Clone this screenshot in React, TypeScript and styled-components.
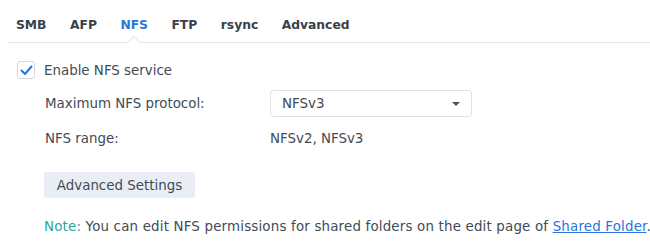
import React, { useState } from 'react';
import styled, { createGlobalStyle } from 'styled-components';

const GlobalStyle = createGlobalStyle`
  html, body {
    margin: 0;
    padding: 0;
    background: #ffffff;
  }
  body {
    font-family: "DejaVu Sans", Verdana, sans-serif;
    color: #414b55;
    -webkit-font-smoothing: antialiased;
  }
`;

const Page = styled.div`
  width: 650px;
  height: 250px;
  overflow: hidden;
  background: #fff;
`;

const TabBar = styled.div`
  display: flex;
  align-items: flex-end;
  height: 42px;
  margin-left: 8px;
  padding-left: 8px;
  border-bottom: 1px solid #e3e7ec;
`;

const Tab = styled.div<{ active?: boolean }>`
  position: relative;
  padding: 0 0 10px 0;
  margin-right: 23.5px;
  font-size: 12.3px;
  font-weight: bold;
  color: ${p => (p.active ? '#2a74dc' : '#39414b')};
  cursor: pointer;

  &::after {
    content: '';
    display: ${p => (p.active ? 'block' : 'none')};
    position: absolute;
    left: 50%;
    margin-left: -5px;
    bottom: -1px;
    width: 9px;
    height: 9px;
    background: #fff;
    border-left: 1px solid #e3e7ec;
    border-top: 1px solid #e3e7ec;
    transform: translate(0, 5px) rotate(45deg);
  }
`;

const Body = styled.div`
  padding: 18px 0 0 17px;
`;

const CheckRow = styled.label`
  display: flex;
  align-items: center;
  gap: 9px;
  height: 18px;
  font-size: 13.4px;
  color: #414b55;
`;

const Box = styled.span`
  width: 16px;
  height: 16px;
  border: 1px solid #d4dae1;
  border-radius: 3px;
  background: #fff;
  display: flex;
  align-items: center;
  justify-content: center;
`;

const FieldGrid = styled.div`
  display: grid;
  grid-template-columns: 225px 202px;
  row-gap: 8px;
  margin: 11px 0 0 28px;
  align-items: center;
  font-size: 13.4px;
  color: #414b55;
`;

const FieldLabel = styled.div`
  height: 27px;
  line-height: 27px;
`;

const Select = styled.div`
  box-sizing: border-box;
  height: 27px;
  border: 1px solid #dde2e8;
  border-radius: 3px;
  padding: 0 11px;
  display: flex;
  align-items: center;
  justify-content: space-between;
  background: #fff;
`;

const Caret = styled.span`
  width: 0;
  height: 0;
  border-left: 4px solid transparent;
  border-right: 4px solid transparent;
  border-top: 4px solid #4a525c;
`;

const Value = styled.div`
  height: 27px;
  line-height: 27px;
`;

const Button = styled.button`
  display: block;
  margin: 20px 0 0 27px;
  height: 26px;
  width: 151px;
  border: none;
  border-radius: 3px;
  background: #e9eef4;
  color: #414b55;
  font-family: inherit;
  font-size: 13.4px;
  padding: 0;
  cursor: pointer;
`;

const Note = styled.div`
  margin: 21px 0 0 27px;
  font-size: 13.4px;
  letter-spacing: 0.18px;
  color: #414b55;
  white-space: nowrap;
`;

const NoteLabel = styled.span`
  color: #2ea59d;
`;

const Link = styled.a`
  color: #2a74dc;
  text-decoration: underline;
  cursor: pointer;
`;

const tabs = ['SMB', 'AFP', 'NFS', 'FTP', 'rsync', 'Advanced'];

export default function App() {
  const [active, setActive] = useState('NFS');
  return (
    <Page>
      <GlobalStyle />
      <TabBar>
        {tabs.map(t => (
          <Tab key={t} active={t === active} onClick={() => setActive(t)}>
            {t}
          </Tab>
        ))}
      </TabBar>
      <Body>
        <CheckRow>
          <Box>
            <svg width="13" height="11" viewBox="0 0 13 11">
              <path d="M1.5 5.5 L5 9 L11.5 1.5" fill="none" stroke="#2a74dc" strokeWidth="2" strokeLinecap="round" strokeLinejoin="round" />
            </svg>
          </Box>
          Enable NFS service
        </CheckRow>
        <FieldGrid>
          <FieldLabel>Maximum NFS protocol:</FieldLabel>
          <Select>
            NFSv3
            <Caret />
          </Select>
          <FieldLabel>NFS range:</FieldLabel>
          <Value>NFSv2, NFSv3</Value>
        </FieldGrid>
        <Button>Advanced Settings</Button>
        <Note>
          <NoteLabel>Note:</NoteLabel> You can edit NFS permissions for shared folders on the edit page of{' '}
          <Link>Shared Folder</Link>.
        </Note>
      </Body>
    </Page>
  );
}
